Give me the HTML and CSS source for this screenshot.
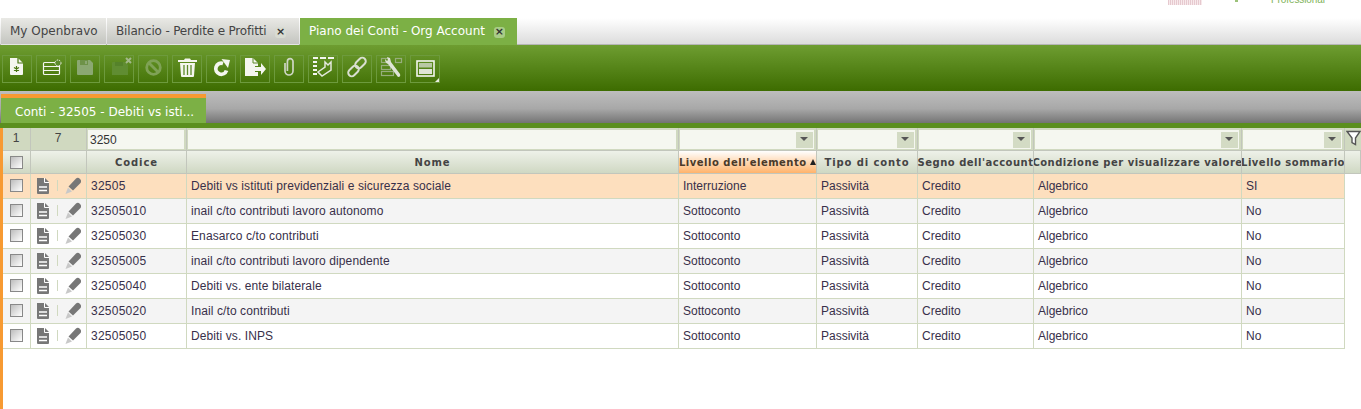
FILE: index.html
```html
<!DOCTYPE html>
<html lang="en">

<head>
    <meta charset="UTF-8">
    <title>Piano dei Conti - Org Account</title>
    <link rel="stylesheet" href="styles.css">
</head>

<body>
    <!-- row icons, reused in every grid row -->
    <svg class="defs" width="0" height="0">
        <symbol id="doc" viewBox="0 0 14 16">
            <path d="M1 0h8l4 4v11q0 1-1 1H2q-1 0-1-1V1q0-1 0-1z" fill="#777"/>
            <path d="M8.500 0v4.500H13" fill="none" stroke="#fff"/>
            <path d="M3 9h8M3 12.500h8" stroke="#fff" stroke-width="1.300"/>
        </symbol>
        <symbol id="pencil" viewBox="0 0 16 17">
            <path d="M3.500 9.500L11 1.500q2-1.500 4 .5t.5 4L8 13.500z" fill="#777"/>
            <path d="M3 10.500l4 4-6.500 2.500z" fill="#c8c8c8"/>
        </symbol>
    </svg>

    <div class="top-bar">
        <div class="logo-bars"></div>
        <div class="logo-dot"></div>
        <div class="logo-text">Professional</div>
    </div>

    <div class="main-tabs">
        <div class="main-tab first">My Openbravo</div>
        <div class="main-tab second">Bilancio - Perdite e Profitti <span class="tab-close">×</span></div>
        <div class="main-tab active">Piano dei Conti - Org Account <span class="tab-close">×</span></div>
    </div>

    <div class="toolbar">
        <!-- new document -->
        <div class="tool-btn"><svg width="26" height="26" viewBox="0 0 26 26"><path d="M6 2h8l5 5v11q0 1-1 1H7q-1 0-1-1z" fill="#f4f6ef"/><path d="M14 2v5h5" fill="none" stroke="#47750f" stroke-width="1.200"/><path d="M12.500 10v6M10 11.500l5 3M15 11.500l-5 3" stroke="#47750f" stroke-width="1.200"/></svg></div>
        <!-- new row -->
        <div class="tool-btn"><svg width="26" height="26" viewBox="0 0 26 26"><rect x="5.500" y="6.500" width="16" height="12" rx="1" fill="none" stroke="#f4f6ef" stroke-width="1.200"/><path d="M5 10.500h17M5 14.500h17" stroke="#f4f6ef" stroke-width="1.200"/><circle cx="20" cy="7" r="3" fill="#5c8a2a" stroke="#f4f6ef" stroke-dasharray="1.500 1"/></svg></div>
        <!-- save -->
        <div class="tool-btn"><svg width="26" height="26" viewBox="0 0 26 26"><path d="M6 4h12l3 3v11q0 1-1 1H6q-1 0-1-1V5q0-1 1-1z" fill="#8ba872"/><rect x="8" y="4" width="8" height="5" fill="#6e9248"/><rect x="13" y="5" width="2" height="3" fill="#8ba872"/></svg></div>
        <!-- save and close -->
        <div class="tool-btn"><svg width="26" height="26" viewBox="0 0 26 26"><path d="M7 6h12l3 3v10H6V7q0-1 1-1z" fill="#608d32"/><rect x="9" y="6" width="8" height="4" fill="#55822a"/><path d="M20 2l5 5M25 2l-5 5" stroke="#a3b88a" stroke-width="2"/></svg></div>
        <!-- undo -->
        <div class="tool-btn"><svg width="26" height="26" viewBox="0 0 26 26"><circle cx="13.500" cy="11.500" r="6.800" fill="none" stroke="#7fa256" stroke-width="2.800"/><path d="M8.500 6.500l10 10" stroke="#7fa256" stroke-width="2.800"/></svg></div>
        <!-- delete -->
        <div class="tool-btn"><svg width="26" height="26" viewBox="0 0 26 26"><path d="M10 4l1-1.500h5L17 4h6v2H4V4z" fill="#f4f6ef"/><path d="M6 7h15l-1 13q0 1-1 1H8q-1 0-1-1z" fill="#f4f6ef"/><path d="M10 9v10M13.500 9v10M17 9v10" stroke="#5c8a2a" stroke-width="1.300"/></svg></div>
        <!-- refresh -->
        <div class="tool-btn"><svg width="26" height="26" viewBox="0 0 26 26"><path d="M18.500 14.500A5.500 5.500 0 1 1 15 7.500" fill="none" stroke="#f4f6ef" stroke-width="3.800"/><path d="M13.500 3l8.500 1-2 8z" fill="#f4f6ef"/></svg></div>
        <!-- export -->
        <div class="tool-btn"><svg width="26" height="26" viewBox="0 0 26 26"><path d="M3 2h8l5 5v3h-3v6h3v4H3z" fill="#f4f6ef"/><path d="M11 2v5h5" fill="none" stroke="#5c8a2a"/><path d="M13 11h6V7l5 6-5 6v-4h-6z" fill="#f4f6ef"/></svg></div>
        <!-- attachment -->
        <div class="tool-btn"><svg width="26" height="26" viewBox="0 0 26 26"><path d="M9 7v8a4 4 0 0 0 8 0V5.500a2.800 2.800 0 0 0-5.600 0V15" fill="none" stroke="#ced6c4" stroke-width="1.700"/></svg></div>
        <!-- audit trail -->
        <div class="tool-btn"><svg width="26" height="26" viewBox="0 0 26 26"><path d="M3 1h5v2H3zM10 1h6v2h-6zM18 1h6v2h-6zM3 5h4v2H3zM3 9h4v2H3zM3 13h4v2H3zM3 17h4v2H3z" fill="#f4f6ef"/><path d="M15 6v5l-7 5 4 4 9-6V6l-3 3z" fill="none" stroke="#e3e8dc" stroke-width="1.500"/></svg></div>
        <!-- link -->
        <div class="tool-btn"><svg width="26" height="26" viewBox="0 0 26 26"><g fill="none" stroke="#d9dfd0" stroke-width="2"><rect x="13" y="1" width="7" height="12" rx="3.500" transform="rotate(45 16.500 7)"/><rect x="6" y="9" width="7" height="12" rx="3.500" transform="rotate(45 9.500 15)"/></g></svg></div>
        <!-- tree settings -->
        <div class="tool-btn"><svg width="26" height="26" viewBox="0 0 26 26"><g fill="none" stroke="#97ad7c" stroke-width="1.200"><rect x="3.500" y="2.500" width="7" height="4"/><rect x="17.500" y="2.500" width="6" height="4"/><rect x="3.500" y="9.500" width="9" height="4"/><rect x="3.500" y="15.500" width="12" height="4"/></g><path d="M9 1l3 1 1 4 9 12q1 3-2 3L10 8Q7 7 7 3l2 2 1-1z" fill="#dfe4d6"/></svg></div>
        <!-- form / grid toggle -->
        <div class="tool-btn"><svg width="26" height="26" viewBox="0 0 26 26"><rect x="5" y="5" width="17" height="15" fill="none" stroke="#f4f6ef" stroke-width="1.600"/><rect x="7" y="7" width="13" height="4.500" fill="#b9c9a4"/><rect x="7" y="13" width="13" height="5" fill="#dfe5d5"/></svg><span class="corner"></span></div>
    </div>

    <div class="sub-tabs">
        <div class="sub-tab">Conti - 32505 - Debiti vs isti...</div>
    </div>
    <div class="green-strip"></div>

    <div class="grid-area">
        <div class="g-row filter-row">
            <div class="f-cell count">1</div>
            <div class="f-cell count">7</div>
            <div class="f-cell"><div class="f-input">3250</div></div>
            <div class="f-cell"><div class="f-input"></div></div>
            <div class="f-cell"><div class="f-input"></div><span class="f-arrow"></span></div>
            <div class="f-cell"><div class="f-input"></div><span class="f-arrow"></span></div>
            <div class="f-cell"><div class="f-input"></div><span class="f-arrow"></span></div>
            <div class="f-cell"><div class="f-input"></div><span class="f-arrow"></span></div>
            <div class="f-cell"><div class="f-input"></div><span class="f-arrow"></span></div>
            <div class="f-cell funnel">
                <svg width="15" height="16" viewBox="0 0 15 16"><path d="M1 1.500h13L9.500 8v6.500l-3.500-2V8z" fill="#fff" stroke="#555" stroke-width="1.400"/></svg>
            </div>
        </div>

        <div class="g-row head-row">
            <div class="h-cell"><span class="check"></span></div>
            <div class="h-cell"></div>
            <div class="h-cell">Codice</div>
            <div class="h-cell">Nome</div>
            <div class="h-cell sorted tight">Livello dell'elemento<span class="sort-arrow"></span></div>
            <div class="h-cell">Tipo di conto</div>
            <div class="h-cell tight">Segno dell'account</div>
            <div class="h-cell tight">Condizione per visualizzare valore</div>
            <div class="h-cell tight">Livello sommario</div>
            <div class="h-cell"></div>
        </div>

        <div class="g-row d-row selected">
            <div class="d-cell center"><span class="check"></span></div>
            <div class="d-cell actions"><svg class="i-doc"><use href="#doc"/></svg><span class="sep"></span><svg class="i-pencil"><use href="#pencil"/></svg></div>
            <div class="d-cell code">32505</div>
            <div class="d-cell name">Debiti vs istituti previdenziali e sicurezza sociale</div>
            <div class="d-cell">Interruzione</div>
            <div class="d-cell">Passività</div>
            <div class="d-cell">Credito</div>
            <div class="d-cell">Algebrico</div>
            <div class="d-cell">SI</div>
        </div>
        <div class="g-row d-row even">
            <div class="d-cell center"><span class="check"></span></div>
            <div class="d-cell actions"><svg class="i-doc"><use href="#doc"/></svg><span class="sep"></span><svg class="i-pencil"><use href="#pencil"/></svg></div>
            <div class="d-cell code">32505010</div>
            <div class="d-cell name">inail c/to contributi lavoro autonomo</div>
            <div class="d-cell">Sottoconto</div>
            <div class="d-cell">Passività</div>
            <div class="d-cell">Credito</div>
            <div class="d-cell">Algebrico</div>
            <div class="d-cell">No</div>
        </div>
        <div class="g-row d-row">
            <div class="d-cell center"><span class="check"></span></div>
            <div class="d-cell actions"><svg class="i-doc"><use href="#doc"/></svg><span class="sep"></span><svg class="i-pencil"><use href="#pencil"/></svg></div>
            <div class="d-cell code">32505030</div>
            <div class="d-cell name">Enasarco c/to contributi</div>
            <div class="d-cell">Sottoconto</div>
            <div class="d-cell">Passività</div>
            <div class="d-cell">Credito</div>
            <div class="d-cell">Algebrico</div>
            <div class="d-cell">No</div>
        </div>
        <div class="g-row d-row even">
            <div class="d-cell center"><span class="check"></span></div>
            <div class="d-cell actions"><svg class="i-doc"><use href="#doc"/></svg><span class="sep"></span><svg class="i-pencil"><use href="#pencil"/></svg></div>
            <div class="d-cell code">32505005</div>
            <div class="d-cell name">inail c/to contributi lavoro dipendente</div>
            <div class="d-cell">Sottoconto</div>
            <div class="d-cell">Passività</div>
            <div class="d-cell">Credito</div>
            <div class="d-cell">Algebrico</div>
            <div class="d-cell">No</div>
        </div>
        <div class="g-row d-row">
            <div class="d-cell center"><span class="check"></span></div>
            <div class="d-cell actions"><svg class="i-doc"><use href="#doc"/></svg><span class="sep"></span><svg class="i-pencil"><use href="#pencil"/></svg></div>
            <div class="d-cell code">32505040</div>
            <div class="d-cell name">Debiti vs. ente bilaterale</div>
            <div class="d-cell">Sottoconto</div>
            <div class="d-cell">Passività</div>
            <div class="d-cell">Credito</div>
            <div class="d-cell">Algebrico</div>
            <div class="d-cell">No</div>
        </div>
        <div class="g-row d-row even">
            <div class="d-cell center"><span class="check"></span></div>
            <div class="d-cell actions"><svg class="i-doc"><use href="#doc"/></svg><span class="sep"></span><svg class="i-pencil"><use href="#pencil"/></svg></div>
            <div class="d-cell code">32505020</div>
            <div class="d-cell name">Inail c/to contributi</div>
            <div class="d-cell">Sottoconto</div>
            <div class="d-cell">Passività</div>
            <div class="d-cell">Credito</div>
            <div class="d-cell">Algebrico</div>
            <div class="d-cell">No</div>
        </div>
        <div class="g-row d-row">
            <div class="d-cell center"><span class="check"></span></div>
            <div class="d-cell actions"><svg class="i-doc"><use href="#doc"/></svg><span class="sep"></span><svg class="i-pencil"><use href="#pencil"/></svg></div>
            <div class="d-cell code">32505050</div>
            <div class="d-cell name">Debiti vs. INPS</div>
            <div class="d-cell">Sottoconto</div>
            <div class="d-cell">Passività</div>
            <div class="d-cell">Credito</div>
            <div class="d-cell">Algebrico</div>
            <div class="d-cell">No</div>
        </div>
    </div>
</body>

</html>
```

FILE: styles.css
```css
* {
    box-sizing: border-box;
}

html,
body {
    height: 409px;
    overflow: hidden;
}

body {
    margin: 0;
    background-color: white;
    font-family: "Liberation Sans", Arial, sans-serif;
    font-size: 12px;
    color: #38304a;
}

.defs {
    position: absolute;
}

.top-bar {
    height: 18px;
    display: flex;
    overflow: hidden;
    padding-left: 1168px;
}

.logo-bars {
    width: 34px;
    height: 5px;
    background: repeating-linear-gradient(90deg, #e6c9cf 0 1px, #f7e9eb 1px 2px);
}

.logo-dot {
    width: 3px;
    height: 2px;
    margin-left: 33px;
    background-color: #9cc27a;
}

.logo-text {
    margin-left: 33px;
    margin-top: -6px;
    font-size: 10px;
    line-height: 12px;
    letter-spacing: -0.1px;
    color: #7fb35a;
}

.main-tabs {
    height: 27px;
    display: flex;
    padding-left: 1px;
    border-bottom: 1px solid #b5b5b5;
    background: linear-gradient(#fff, #dcdcdc);
}

.main-tab {
    height: 27px;
    padding: 6px 0 0 9px;
    margin-right: 1px;
    font-family: "DejaVu Sans", Verdana, sans-serif;
    font-size: 12px;
    white-space: nowrap;
    color: #444;
    background: linear-gradient(#e9e9e5, #c4c5c0);
    border-bottom: 1px solid #e4e4e4;
}

.main-tab.first {
    width: 105px;
}

.main-tab.second {
    width: 192px;
    letter-spacing: -0.17px;
}

.main-tab.active {
    width: 217px;
    margin-right: 0;
    color: white;
    background: #7cb045;
    border-bottom: none;
}

.tab-close {
    display: inline-block;
    width: 11px;
    height: 11px;
    margin-left: 5px;
    border-radius: 3px;
    background-color: #d8dbd2;
    color: #333;
    font-size: 11px;
    font-weight: bold;
    line-height: 10px;
    letter-spacing: 0;
    text-align: center;
}

.active .tab-close {
    background-color: #a9cd87;
}

.toolbar {
    height: 46px;
    display: flex;
    gap: 4px;
    padding: 10px 0 0 2px;
    background: linear-gradient(#6e9d31 0, #3d6c00 100%);
}

.tool-btn {
    position: relative;
    width: 30px;
    height: 28px;
    display: flex;
    justify-content: center;
    border: 1px solid #6d9a3d;
}

.corner {
    position: absolute;
    right: 0;
    bottom: 0;
    border-style: solid;
    border-width: 0 0 4px 4px;
    border-color: transparent transparent #e8ecdf transparent;
}

.sub-tabs {
    height: 32px;
    display: flex;
    padding-left: 1px;
    background: linear-gradient(#bdbdbd 0, #a8a8a8 55%, #747474 100%);
}

.sub-tab {
    width: 205px;
    height: 29px;
    margin-top: 3px;
    padding: 7px 0 0 14px;
    border-top: 4px solid #f79a32;
    background-color: #7cb045;
    color: white;
    font-family: "DejaVu Sans", Verdana, sans-serif;
    font-size: 12px;
    white-space: nowrap;
}

.green-strip {
    height: 5px;
    background-color: #5b8f1e;
}

.grid-area {
    height: 281px;
    border-left: 3px solid #f79a32;
}

.g-row {
    display: grid;
    grid-template-columns: 28px 56px 100px 492px 138px 101px 116px 208px 103px 16px;
    width: 1358px;
}

.filter-row {
    height: 23px;
    background-color: #d0d9c0;
    border-bottom: 1px solid #c2c6bc;
}

.f-cell {
    position: relative;
    height: 22px;
    padding: 2px 2px 1px 1px;
    border-right: 1px solid #c2c6bc;
}

.count {
    padding-top: 3px;
    text-align: center;
    color: #444;
}

.f-input {
    height: 19px;
    padding: 3px 0 0 2px;
    background-color: #f5f7f0;
    color: #333;
}

.f-arrow {
    position: absolute;
    right: 3px;
    top: 4px;
    width: 17px;
    height: 16px;
    background-color: #d3dbc4;
}

.f-arrow::after {
    content: "";
    position: absolute;
    left: 4px;
    top: 5px;
    border-style: solid;
    border-width: 4px 4px 0 4px;
    border-color: #555 transparent transparent transparent;
}

.funnel {
    padding: 2px 0 0 1px;
    border-right: none;
}

.head-row {
    height: 23px;
}

.h-cell {
    height: 23px;
    display: flex;
    align-items: center;
    justify-content: center;
    overflow: hidden;
    border-right: 1px solid #c2c6bc;
    border-bottom: 1px solid #c2c6bc;
    background: linear-gradient(#eef1e9, #cfd8c3);
    font-family: "DejaVu Sans", Verdana, sans-serif;
    font-size: 10px;
    font-weight: bold;
    letter-spacing: 0.9px;
    white-space: nowrap;
    color: #444;
}

.h-cell.tight {
    letter-spacing: 0.5px;
}

.h-cell.sorted {
    justify-content: flex-start;
    background: linear-gradient(#fff, #ffb36b);
    color: #4a3a2a;
}

.sort-arrow {
    margin-left: 3px;
    border-style: solid;
    border-width: 0 3px 6px 3px;
    border-color: transparent transparent #222 transparent;
}

.check {
    width: 13px;
    height: 13px;
    border: 1px solid #888;
    background: linear-gradient(135deg, #bdbdbd, #fff);
}

.d-row {
    height: 25px;
    width: 1342px;
    background-color: white;
}

.d-row.even {
    background-color: #f4f4f4;
}

.d-row.selected {
    background-color: #fddfbe;
}

.d-cell {
    height: 25px;
    display: flex;
    align-items: center;
    padding: 0 0 1px 4px;
    white-space: nowrap;
    overflow: hidden;
    border-right: 1px solid #d0d9c0;
    border-bottom: 1px solid #d0d9c0;
}

.d-cell.center {
    justify-content: center;
    padding-left: 0;
}

.d-cell.actions {
    padding-left: 5px;
}

.d-cell.code {
    letter-spacing: 0.25px;
}

.d-cell.name {
    letter-spacing: 0.1px;
}

.i-doc {
    width: 14px;
    height: 16px;
}

.i-pencil {
    width: 16px;
    height: 17px;
}

.sep {
    width: 1px;
    height: 11px;
    margin: 0 7px;
    background-color: #d0d9c0;
}
```
